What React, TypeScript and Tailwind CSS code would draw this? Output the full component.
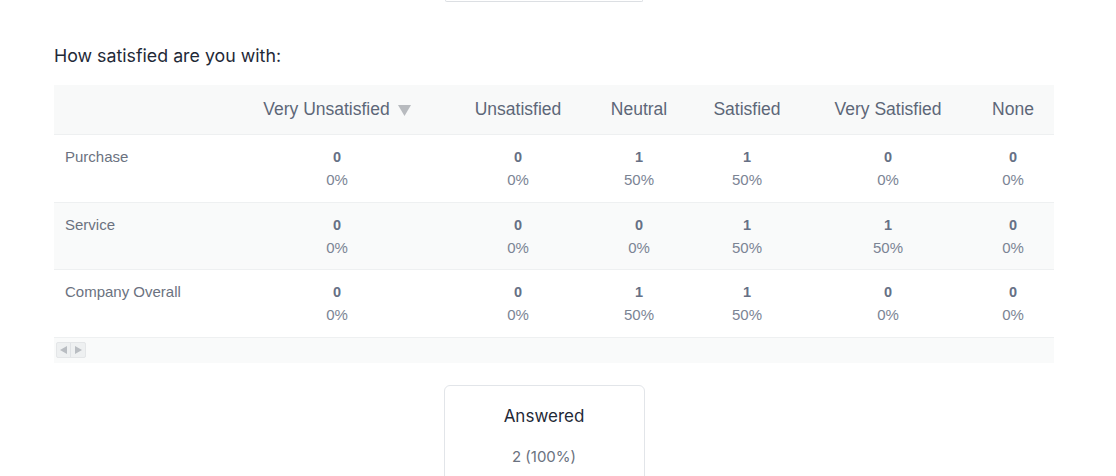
import React from "react";

const cols = ["Very Unsatisfied", "Unsatisfied", "Neutral", "Satisfied", "Very Satisfied", "None"];
const rows: { label: string; vals: [number, string][] }[] = [
  { label: "Purchase", vals: [[0, "0%"], [0, "0%"], [1, "50%"], [1, "50%"], [0, "0%"], [0, "0%"]] },
  { label: "Service", vals: [[0, "0%"], [0, "0%"], [0, "0%"], [1, "50%"], [1, "50%"], [0, "0%"]] },
  { label: "Company Overall", vals: [[0, "0%"], [0, "0%"], [1, "50%"], [1, "50%"], [0, "0%"], [0, "0%"]] },
];

const grid = "grid grid-cols-[172px_222px_140px_102px_114px_168px_82px]";

export default function App() {
  return (
    <div className="w-[1116px] h-[476px] bg-white overflow-hidden" style={{ fontFamily: "Inter, sans-serif" }}>
      <div className="w-[1088px]">
        <div className="mx-auto w-[198px] h-[2px] border-x border-b border-[#dcdfe3] rounded-b-[2px]" />
      </div>
      <div className="px-[54px]">
        <div className="mt-[42px] text-[17.8px] leading-[24px] text-[#1f2937]">How satisfied are you with:</div>
        <div className="mt-[17px] w-[1000px]" style={{ fontFamily: '"Liberation Sans", Arial, sans-serif' }}>
          <div className={`${grid} h-[50px] bg-[#f8f9f9] border-b border-[#eef0f1] items-center text-[17.5px] text-[#5d6778]`}>
            <div />
            {cols.map((c, i) => (
              <div key={c} className="flex items-center justify-center">
                <span>{c}</span>
                {i === 0 && (
                  <svg width="13" height="12" viewBox="0 0 13 12" className="ml-[8px] mt-[1px]">
                    <polygon points="0,1 13,1 6.5,12" fill="#b8bbbf" />
                  </svg>
                )}
              </div>
            ))}
          </div>
          {rows.map((r, ri) => (
            <div
              key={r.label}
              className={`${grid} h-[67.5px] border-b border-[#eef0f1] ${ri === 1 ? "bg-[#f9fafa]" : "bg-white"}`}
            >
              <div className="pl-[11px] pt-[12px] text-[15px] leading-[20px] text-[#6b7280]">{r.label}</div>
              {r.vals.map(([n, p], i) => (
                <div key={i} className="flex flex-col items-center pt-[11px]">
                  <span className="text-[14.5px] leading-[22px] font-bold text-[#667085]">{n}</span>
                  <span className="text-[15px] leading-[23px] text-[#7b8494]">{p}</span>
                </div>
              ))}
            </div>
          ))}
          <div className="h-[25px] bg-[#f9fafa] flex items-center pl-[2px]">
            <div className="flex h-[16px] border border-[#e4e6e8] bg-[#eef0f1] rounded-[2px]">
              <div className="w-[14px] flex items-center justify-center border-r border-[#dfe2e5]">
                <svg width="7" height="8" viewBox="0 0 7 8"><polygon points="7,0 7,8 0,4" fill="#b9bdc2" /></svg>
              </div>
              <div className="w-[14px] flex items-center justify-center">
                <svg width="7" height="8" viewBox="0 0 7 8"><polygon points="0,0 0,8 7,4" fill="#b9bdc2" /></svg>
              </div>
            </div>
          </div>
        </div>
      </div>
      <div className="w-[1088px]">
        <div className="mx-auto mt-[22px] w-[201px] h-[120px] border border-[#e2e5e9] rounded-[6px] flex flex-col items-center">
          <div className="mt-[17px] text-[17px] leading-[26px] text-[#1f2937]">Answered</div>
          <div className="mt-[17px] text-[15px] leading-[22px] text-[#6b7280]">2 (100%)</div>
        </div>
      </div>
    </div>
  );
}
